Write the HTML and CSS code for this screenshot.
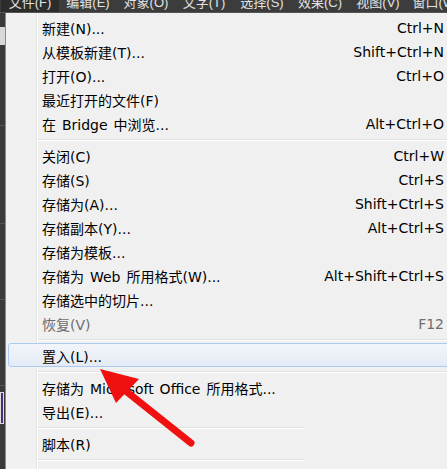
FILE: index.html
```html
<!DOCTYPE html>
<html>
<head>
<meta charset="utf-8">
<link rel="stylesheet" href="styles.css">
</head>
<body>
<div class="menubar">
  <span class="top active">文件(F)</span>
  <span class="top">编辑(E)</span>
  <span class="top">对象(O)</span>
  <span class="top">文字(T)</span>
  <span class="top">选择(S)</span>
  <span class="top">效果(C)</span>
  <span class="top">视图(V)</span>
  <span class="top">窗口(W)</span>
</div>
<div class="main">
  <div class="strip">
    <div class="strip-a"></div>
    <div class="strip-b"></div>
    <div class="strip-c"></div>
    <div class="strip-d"></div>
    <div class="strip-e"></div>
    <div class="strip-f"></div>
    <div class="strip-purple"></div>
  </div>
  <div class="menu">
    <div class="row"><span>新建(N)...</span><span class="key">Ctrl+N</span></div>
    <div class="row"><span>从模板新建(T)...</span><span class="key">Shift+Ctrl+N</span></div>
    <div class="row"><span>打开(O)...</span><span class="key">Ctrl+O</span></div>
    <div class="row"><span>最近打开的文件(F)</span></div>
    <div class="row"><span>在 Bridge 中浏览...</span><span class="key">Alt+Ctrl+O</span></div>
    <div class="sep"></div>
    <div class="row"><span>关闭(C)</span><span class="key">Ctrl+W</span></div>
    <div class="row"><span>存储(S)</span><span class="key">Ctrl+S</span></div>
    <div class="row"><span>存储为(A)...</span><span class="key">Shift+Ctrl+S</span></div>
    <div class="row"><span>存储副本(Y)...</span><span class="key">Alt+Ctrl+S</span></div>
    <div class="row"><span>存储为模板...</span></div>
    <div class="row"><span>存储为 Web 所用格式(W)...</span><span class="key">Alt+Shift+Ctrl+S</span></div>
    <div class="row"><span>存储选中的切片...</span></div>
    <div class="row disabled"><span>恢复(V)</span><span class="key">F12</span></div>
    <div class="sep"></div>
    <div class="row hover"><span>置入(L)...</span></div>
    <div class="sep"></div>
    <div class="row"><span>存储为 Microsoft Office 所用格式...</span></div>
    <div class="row"><span>导出(E)...</span></div>
    <div class="sep short"></div>
    <div class="row"><span>脚本(R)</span></div>
    <div class="sep short"></div>
  </div>
</div>
<svg class="arrow" width="447" height="469" viewBox="0 0 447 469">
  <line x1="122" y1="388" x2="191" y2="443" stroke="#f01010" stroke-width="7" stroke-linecap="round"/>
  <polygon points="100,369 116,403 139,379" fill="#f01010"/>
</svg>
</body>
</html>
```

FILE: styles.css
```css
html, body {
  margin: 0;
  padding: 0;
}
body {
  width: 447px;
  height: 469px;
  overflow: hidden;
  background: #3b3b3b;
  position: relative;
  font-family: "DejaVu Sans", "Noto Sans CJK SC", sans-serif;
}
.menubar {
  height: 12px;
  display: flex;
  padding-left: 1px;
  background: #3c3c3c;
  overflow: hidden;
  border-bottom: 1px solid #555;
}
.top {
  width: 58px;
  flex: none;
  text-align: center;
  color: #e2e2e2;
  font-family: "Liberation Sans", "Noto Sans CJK SC", sans-serif;
  font-size: 13px;
  line-height: 13px;
  margin-top: -4px;
  height: 17px;
}
.top.active {
  background: #2c2c2c;
}
.main {
  display: flex;
  height: 456px;
}
.strip {
  width: 5px;
  flex: none;
  background: #3a3a3a;
  border-right: 1px solid #8a8a8a;
  display: flex;
  flex-direction: column;
}
.strip-a { height: 14px; }
.strip-b { height: 18px; background: #d8d8d8; }
.strip-c { height: 80px; border-bottom: 1px solid #555; }
.strip-d { height: 97px; border-bottom: 1px solid #555; }
.strip-e { height: 75px; border-bottom: 1px solid #555; }
.strip-f { height: 85px; border-bottom: 1px solid #555; }
.strip-purple { height: 30px; margin-top: 6px; background: #4b2a7a; border: 1px solid #ddd; width: 2px; }
.menu {
  width: 450px;
  flex: none;
  padding-top: 3px;
  box-sizing: border-box;
  background: linear-gradient(to right, #f1f1f1 30px, #e2e3e3 30px, #e2e3e3 31px, #ffffff 31px, #ffffff 32px, #f0f0f0 32px);
  font-size: 14px;
  color: #000;
  word-spacing: 1.5px;
}
.row {
  height: 24px;
  margin: 0 2px;
  padding: 0 10px 0 34px;
  display: flex;
  align-items: center;
  justify-content: space-between;
  white-space: nowrap;
  box-sizing: border-box;
}
.row.disabled {
  color: #6d6d6d;
}
.row.hover {
  border: 1px solid #a9cbf2;
  border-radius: 3px;
  background: linear-gradient(to bottom, #f2f5fa, #e4ebf5);
  margin-top: -1px;
  margin-bottom: 1px;
  padding-left: 33px;
  padding-top: 1px;
}
.sep {
  height: 8px;
  margin-left: 32px;
  position: relative;
}
.sep::before {
  content: "";
  position: absolute;
  left: 0;
  right: 0;
  top: 3px;
  height: 1px;
  background: #e0e0e0;
  border-bottom: 1px solid #ffffff;
}
.sep.short {
  width: 267px;
}
.arrow {
  position: absolute;
  left: 0;
  top: 0;
  pointer-events: none;
}
```
